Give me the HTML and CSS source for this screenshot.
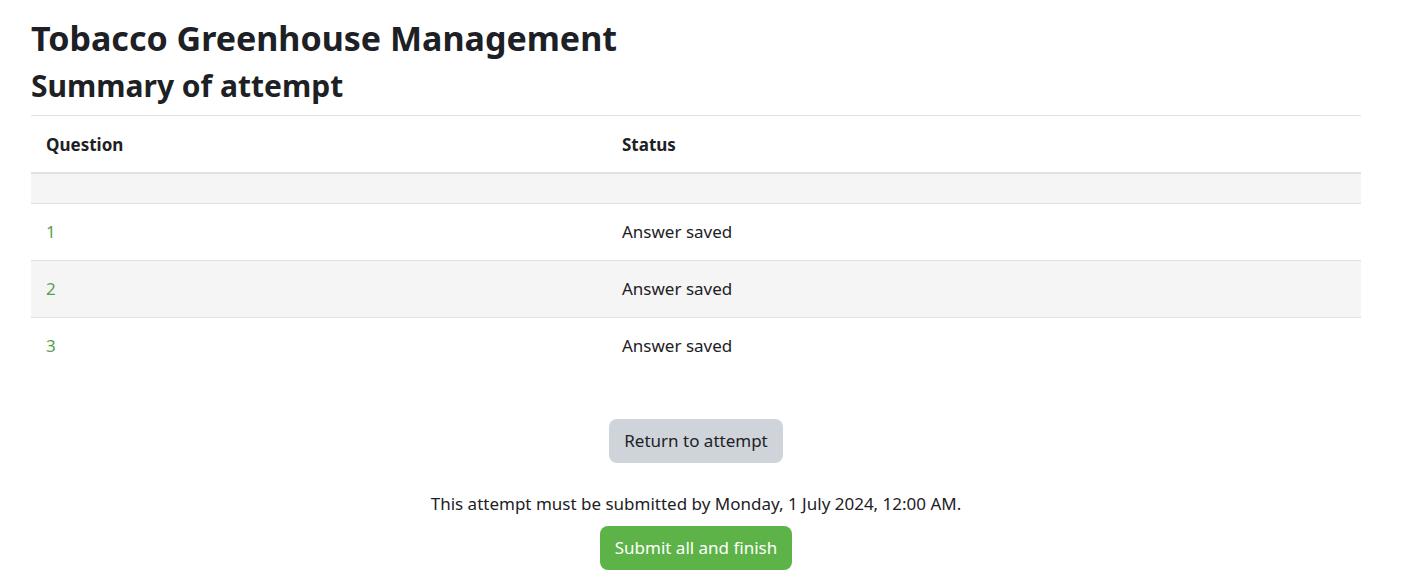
FILE: index.html
```html
<!DOCTYPE html>
<html lang="en">
<head>
<meta charset="utf-8">
<title>Summary of attempt</title>
<link rel="stylesheet" href="styles.css">
</head>
<body>
<main class="page">
  <h1 class="title">Tobacco Greenhouse Management</h1>
  <h2 class="subtitle">Summary of attempt</h2>
  <table class="summary">
    <thead>
      <tr><th class="col-q">Question</th><th>Status</th></tr>
    </thead>
    <tbody>
      <tr class="stripe empty"><td></td><td></td></tr>
      <tr><td><a href="#" class="qlink">1</a></td><td>Answer saved</td></tr>
      <tr class="stripe"><td><a href="#" class="qlink">2</a></td><td>Answer saved</td></tr>
      <tr><td><a href="#" class="qlink">3</a></td><td>Answer saved</td></tr>
    </tbody>
  </table>
  <div class="actions">
    <button class="btn btn-secondary">Return to attempt</button>
    <p class="deadline">This attempt must be submitted by Monday, 1 July 2024, 12:00 AM.</p>
    <button class="btn btn-success">Submit all and finish</button>
  </div>
</main>
</body>
</html>
```

FILE: styles.css
```css
* { box-sizing: border-box; }
html, body { margin: 0; padding: 0; background: #fff; }
body {
  font-family: "Noto Sans", "Open Sans", "Liberation Sans", sans-serif;
  color: #1d2125;
  font-size: 17px;
}
.page {
  width: 1330px;
  margin-left: 31px;
}
.title {
  margin: 0;
  padding-top: 14px;
  font-size: 34px;
  line-height: 48px;
  font-weight: 700;
}
.subtitle {
  margin: 0;
  font-size: 30px;
  line-height: 48px;
  font-weight: 700;
  padding-bottom: 5px;
}
.summary {
  width: 100%;
  border-collapse: collapse;
}
.summary th, .summary td {
  text-align: left;
  padding: 15px;
  line-height: 26px;
  border-top: 1px solid #dee2e6;
  vertical-align: top;
}
.summary th { font-weight: 700; padding-top: 16px; padding-bottom: 14px; }
.summary thead th { border-bottom: 2px solid #dee2e6; }
.summary .col-q { width: 576px; }
.summary tr.stripe td { background: #f5f5f5; }
.summary tr.empty td { height: 30px; padding: 0; border-top: none; }
.qlink { color: #5aa04a; text-decoration: none; }
.actions {
  display: flex;
  flex-direction: column;
  align-items: center;
  padding-top: 45px;
}
.btn {
  font-family: inherit;
  font-size: 17px;
  line-height: 26px;
  padding: 9px 15px;
  height: 44px;
  border: none;
  border-radius: 8px;
  cursor: pointer;
}
.btn-secondary { background: #ced4da; color: #1d2125; }
.btn-success { background: #5db347; color: #fff; }
.deadline {
  margin: 27px 0 8px;
  line-height: 28px;
}
```
